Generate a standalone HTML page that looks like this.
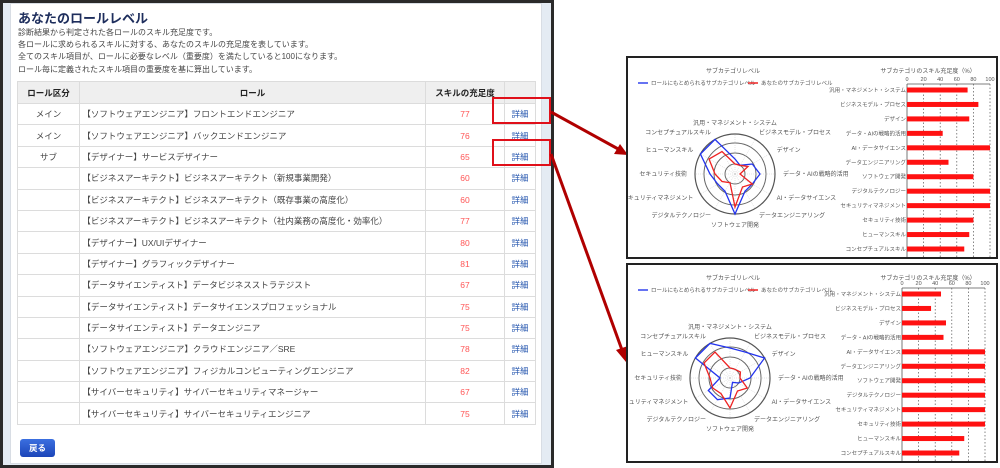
<!DOCTYPE html>
<html><head><meta charset="utf-8">
<style>
*{margin:0;padding:0;box-sizing:border-box}
body{width:1000px;height:468px;background:#fff;position:relative;overflow:hidden;font-family:"Liberation Sans","Noto Sans CJK JP",sans-serif;}
#panel{position:absolute;left:0;top:0;width:554px;height:468px;border:3px solid #2a2a2a;background:#e4ebf3;}
#inner{position:absolute;left:7px;top:0;width:532px;height:461px;background:#fff;border:1px solid #d8dde4;}
h1{position:absolute;left:7px;top:4px;font-size:13px;font-weight:bold;color:#1d2d5c;}
.d{position:absolute;left:7px;font-size:8px;color:#444;}
table{position:absolute;left:6px;top:77px;width:519px;border-collapse:collapse;font-size:8.5px;color:#444;}
td,th{border:1px solid #dcdcdc;height:21.4px;}
th{background:#efefef;font-weight:bold;color:#222;height:22px}
td.c{text-align:center}
td.r{text-align:center;color:#f55}
td.k{text-align:center;color:#2a5ab0}
#btn{position:absolute;left:9px;top:435px;width:35px;height:18px;background:linear-gradient(#3b6fe0,#1c45b8);border-radius:3px;color:#fff;font-size:8.5px;font-weight:bold;text-align:center;line-height:18px}
.rb{position:absolute;border:2px solid #e0101a;}
.box{position:absolute;border:2px solid #222;background:#fff;}
svg text{font-family:"Liberation Sans","Noto Sans CJK JP",sans-serif;fill:#555}
</style></head><body>
<div id="panel"><div id="inner">
<h1>あなたのロールレベル</h1>
<div class="d" style="top:23px">診断結果から判定された各ロールのスキル充足度です。</div>
<div class="d" style="top:35px">各ロールに求められるスキルに対する、あなたのスキルの充足度を表しています。</div>
<div class="d" style="top:47px">全てのスキル項目が、ロールに必要なレベル（重要度）を満たしていると100になります。</div>
<div class="d" style="top:60px">ロール毎に定義されたスキル項目の重要度を基に算出しています。</div>
<table>
<tr><th style="width:62px">ロール区分</th><th style="width:346px">ロール</th><th style="width:79px">スキルの充足度</th><th></th></tr>
<tr><td class="c">メイン</td><td>&nbsp;【ソフトウェアエンジニア】フロントエンドエンジニア</td><td class="r">77</td><td class="k">詳細</td></tr>
<tr><td class="c">メイン</td><td>&nbsp;【ソフトウェアエンジニア】バックエンドエンジニア</td><td class="r">76</td><td class="k">詳細</td></tr>
<tr><td class="c">サブ</td><td>&nbsp;【デザイナー】サービスデザイナー</td><td class="r">65</td><td class="k">詳細</td></tr>
<tr><td></td><td>&nbsp;【ビジネスアーキテクト】ビジネスアーキテクト（新規事業開発）</td><td class="r">60</td><td class="k">詳細</td></tr>
<tr><td></td><td>&nbsp;【ビジネスアーキテクト】ビジネスアーキテクト（既存事業の高度化）</td><td class="r">60</td><td class="k">詳細</td></tr>
<tr><td></td><td>&nbsp;【ビジネスアーキテクト】ビジネスアーキテクト（社内業務の高度化・効率化）</td><td class="r">77</td><td class="k">詳細</td></tr>
<tr><td></td><td>&nbsp;【デザイナー】UX/UIデザイナー</td><td class="r">80</td><td class="k">詳細</td></tr>
<tr><td></td><td>&nbsp;【デザイナー】グラフィックデザイナー</td><td class="r">81</td><td class="k">詳細</td></tr>
<tr><td></td><td>&nbsp;【データサイエンティスト】データビジネスストラテジスト</td><td class="r">67</td><td class="k">詳細</td></tr>
<tr><td></td><td>&nbsp;【データサイエンティスト】データサイエンスプロフェッショナル</td><td class="r">75</td><td class="k">詳細</td></tr>
<tr><td></td><td>&nbsp;【データサイエンティスト】データエンジニア</td><td class="r">75</td><td class="k">詳細</td></tr>
<tr><td></td><td>&nbsp;【ソフトウェアエンジニア】クラウドエンジニア／SRE</td><td class="r">78</td><td class="k">詳細</td></tr>
<tr><td></td><td>&nbsp;【ソフトウェアエンジニア】フィジカルコンピューティングエンジニア</td><td class="r">82</td><td class="k">詳細</td></tr>
<tr><td></td><td>&nbsp;【サイバーセキュリティ】サイバーセキュリティマネージャー</td><td class="r">67</td><td class="k">詳細</td></tr>
<tr><td></td><td>&nbsp;【サイバーセキュリティ】サイバーセキュリティエンジニア</td><td class="r">75</td><td class="k">詳細</td></tr>
</table>
<div id="btn">戻る</div>
</div></div>
<div class="rb" style="left:492px;top:97px;width:59px;height:27px"></div>
<div class="rb" style="left:492px;top:139px;width:59px;height:27px"></div>
<svg style="position:absolute;left:0;top:0" width="1000" height="468">
<line x1="551" y1="112" x2="620" y2="150" stroke="#b00000" stroke-width="3"/>
<polygon points="628,155 614,154 620,144" fill="#b00000"/>
<line x1="551" y1="154" x2="622" y2="350" stroke="#b00000" stroke-width="3"/>
<polygon points="626,362 616,350 628,346" fill="#b00000"/>
</svg>

<div class="box" style="left:626px;top:56px;width:372px;height:203px"><svg id="c1" width="368" height="199"></svg></div>
<div class="box" style="left:626px;top:263px;width:372px;height:200px"><svg id="c2" width="368" height="196"></svg></div>

<script>
var labels=["汎用・マネジメント・システム","ビジネスモデル・プロセス","デザイン","データ・AIの戦略的活用","AI・データサイエンス","データエンジニアリング","ソフトウェア開発","デジタルテクノロジー","セキュリティマネジメント","セキュリティ技術","ヒューマンスキル","コンセプチュアルスキル"];
function draw(id,cx,cy,bx0,bx1,by0,by1,vals,blue,red){
 var s=document.getElementById(id),h='';
 h+='<text x="105" y="15" font-size="6" text-anchor="middle">サブカテゴリレベル</text>';
 h+='<text x="300" y="15" font-size="6" text-anchor="middle">サブカテゴリのスキル充足度（%）</text>';
 h+='<line x1="10" y1="25" x2="20" y2="25" stroke="#3344ee" stroke-width="1.5"/><text x="23" y="27" font-size="5.5">ロールにもとめられるサブカテゴリレベル</text>';
 h+='<line x1="120" y1="25" x2="130" y2="25" stroke="#ee2222" stroke-width="1.5"/><text x="133" y="27" font-size="5.5">あなたのサブカテゴリレベル</text>';
 [40,31,21,10].forEach(function(r,i){h+='<circle cx="'+cx+'" cy="'+cy+'" r="'+r+'" fill="none" stroke="'+(i==0?'#555':'#666')+'" stroke-width="'+(i==0?1.2:1)+'"/>';});
 function pt(i,v){var a=-Math.PI/2+i*Math.PI/6,r=v*10;return (cx+r*Math.cos(a)).toFixed(1)+','+(cy+r*Math.sin(a)).toFixed(1);}
 for(var i=0;i<12;i++){h+='<line x1="'+cx+'" y1="'+cy+'" x2="'+pt(i,4).split(',')[0]+'" y2="'+pt(i,4).split(',')[1]+'" stroke="#ccc" stroke-width="0.5" stroke-dasharray="1,1"/>';
  var a=-Math.PI/2+i*Math.PI/6,lx=cx+48*Math.cos(a),ly=cy+48*Math.sin(a)+2;
  var an=Math.abs(Math.cos(a))<0.3?'middle':(Math.cos(a)>0?'start':'end');
  if(i==0)ly-=3; if(i==6)ly+=3;
  h+='<text x="'+lx.toFixed(1)+'" y="'+ly.toFixed(1)+'" font-size="6" text-anchor="'+an+'">'+labels[i]+'</text>';}
 h+='<polygon points="'+blue.map(function(v,i){return pt(i,v)}).join(' ')+'" fill="none" stroke="#2233ee" stroke-width="1.3"/>';
 h+='<polygon points="'+red.map(function(v,i){return pt(i,v)}).join(' ')+'" fill="none" stroke="#ee2222" stroke-width="1.3"/>';
 var w=bx1-bx0;
 for(var k=0;k<=5;k++){var x=bx0+w*k/5;h+='<text x="'+x+'" y="'+(by0-9)+'" font-size="5.5" text-anchor="middle">'+(k*20)+'</text>';
  if(k>0)h+='<line x1="'+x+'" y1="'+(by0-6)+'" x2="'+x+'" y2="'+(by1+8)+'" stroke="#555" stroke-width="0.7" stroke-dasharray="1.5,2"/>';}
 h+='<line x1="'+bx0+'" y1="'+(by0-6)+'" x2="'+bx0+'" y2="'+(by1+8)+'" stroke="#555" stroke-width="0.8"/>';
 h+='<line x1="'+bx0+'" y1="'+(by0-6)+'" x2="'+bx1+'" y2="'+(by0-6)+'" stroke="#555" stroke-width="0.8"/>';
 for(var j=0;j<12;j++){var y=by0+(by1-by0)*j/11;h+='<rect x="'+bx0+'" y="'+(y-2.5)+'" width="'+(w*vals[j]/100)+'" height="5" fill="#ff1111"/>';
  h+='<text x="'+(bx0-1)+'" y="'+(y+2)+'" font-size="5.5" text-anchor="end">'+labels[j]+'</text>';}
 s.innerHTML=h;}
draw('c1',107,116,279,362,32,191,[73,86,75,43,100,50,80,100,100,80,75,69],
 [1.5,1,2,2.5,2,2,4,2,2,2.5,4,4],[1,1,1.5,0.5,2,1.5,3.3,1,1.5,2,3,2.6]);
draw('c2',102,113,274,357,29,188,[47,35,53,50,100,100,100,100,100,100,75,69],
 [3,3,4,2,1,0.5,2,2.5,2.5,1,4,4],[1,1,1.2,1,2,1.5,3,1.8,2,2,3,3]);
</script>
</body></html>
